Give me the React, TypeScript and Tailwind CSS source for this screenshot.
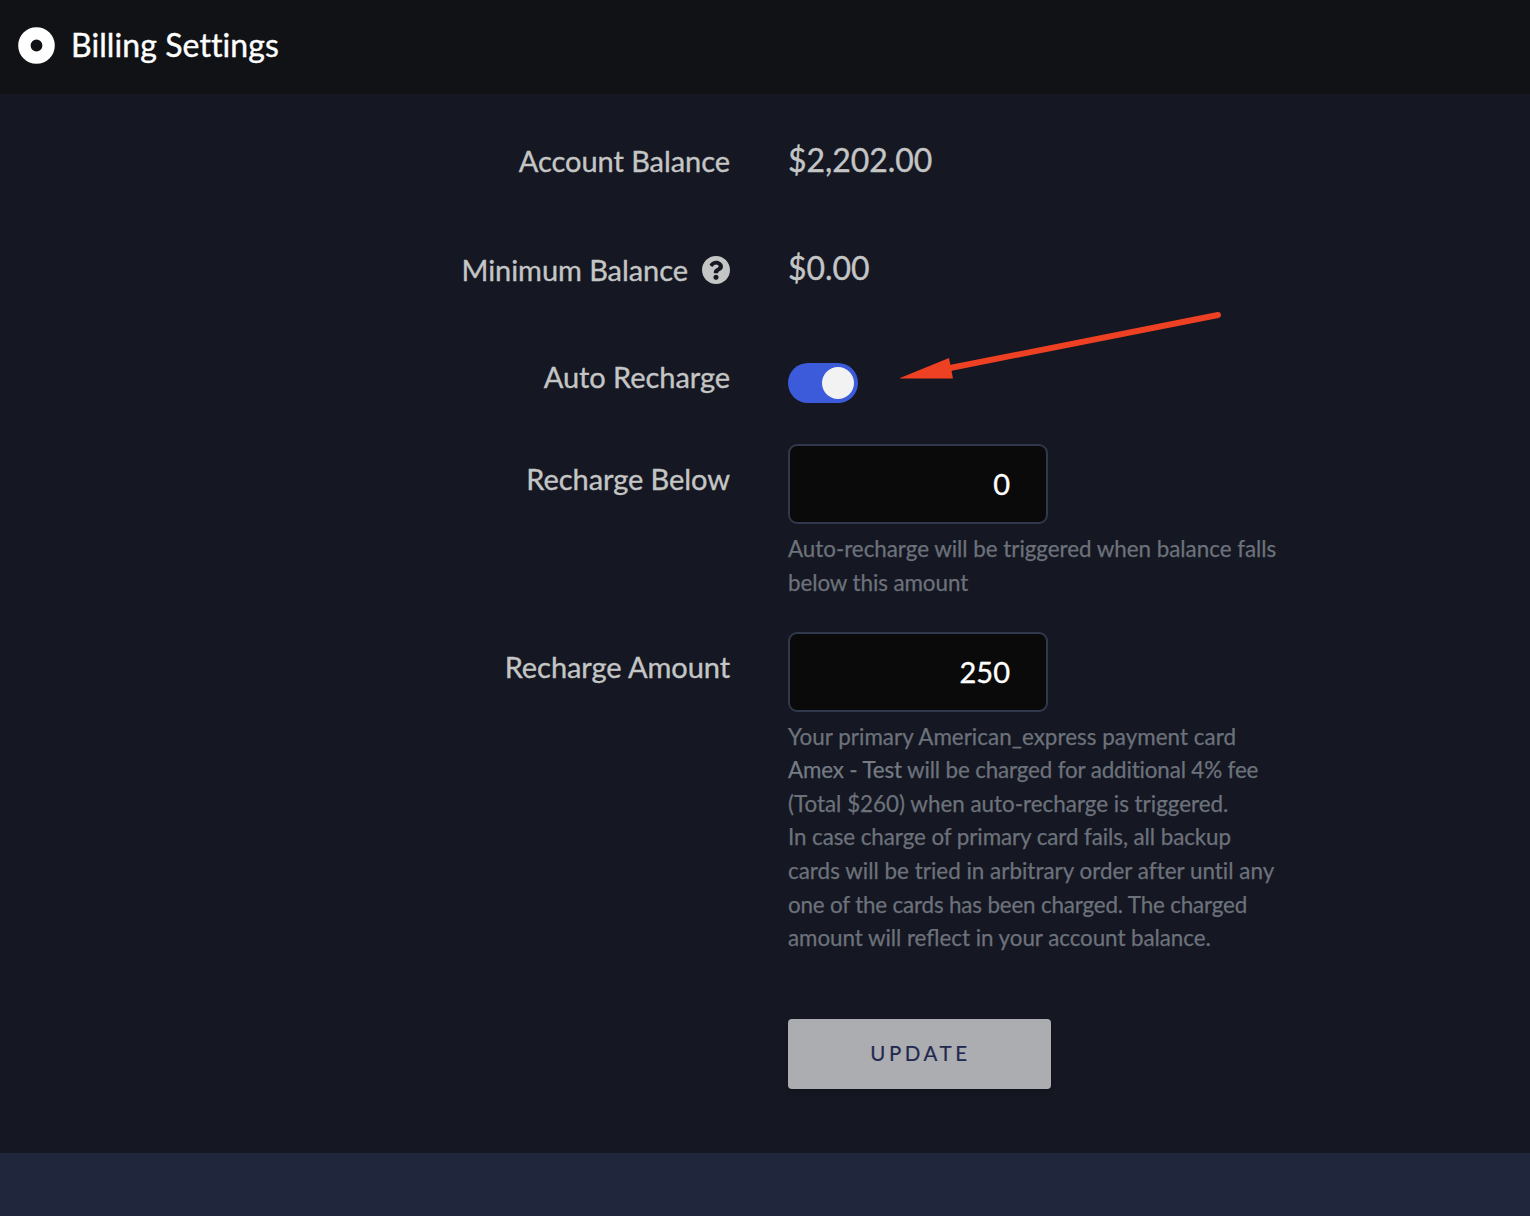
import React, {useState} from 'react';

interface RowProps {
  label: React.ReactNode;
  className: string;
  children: React.ReactNode;
}

const Row: React.FC<RowProps> = ({label, className, children}) => (
  <div className={`flex gap-[58px] ${className}`}>
    <div className="flex w-[730px] items-start justify-end text-[29px] leading-[34px] tracking-[-0.06px] text-[#c4c5c5] [-webkit-text-stroke:0.35px_currentColor]">
      {label}
    </div>
    <div className="w-[500px]">{children}</div>
  </div>
);

const HelpIcon: React.FC = () => (
  <svg viewBox="8 8 496 496" className="mt-[3px] ml-[14px] size-7" fill="currentColor" stroke="none">
    <path d="M504 256c0 136.997-111.043 248-248 248S8 392.997 8 256C8 119.083 119.043 8 256 8s248 111.083 248 248zM262.655 90c-54.497 0-89.255 22.957-116.549 63.758-3.536 5.286-2.353 12.415 2.715 16.258l34.699 26.31c5.205 3.947 12.621 3.008 16.665-2.122 17.864-22.658 30.113-35.797 57.303-35.797 20.429 0 45.698 13.148 45.698 32.958 0 14.976-12.363 22.667-32.534 33.976C247.128 238.528 216 254.941 216 296v4c0 6.627 5.373 12 12 12h56c6.627 0 12-5.373 12-12v-1.333c0-28.462 83.186-29.647 83.186-106.667 0-58.002-60.165-102-116.531-102zM256 338c-25.365 0-46 20.635-46 46 0 25.364 20.635 46 46 46s46-20.636 46-46c0-25.365-20.635-46-46-46z" />
  </svg>
);

const balanceClass =
  'text-[32px] leading-8 tracking-[-0.06px] text-[#c4c5c5] [-webkit-text-stroke:0.35px_currentColor]';
const inputClass =
  'block h-20 w-[260px] rounded-[9px] border-2 border-[#31384b] bg-[#0a0a0a] pr-9 pb-0.5 text-right text-[29px] text-white [-webkit-text-stroke:0.35px_currentColor] focus:outline-none';
const hintClass =
  'text-[22.4px] leading-[33.6px] text-[#6c727b] [-webkit-text-stroke:0.25px_currentColor]';

const App: React.FC = () => {
  const [enabled, setEnabled] = useState(true);
  const [below, setBelow] = useState('0');
  const [amount, setAmount] = useState('250');

  return (
    <div className="relative flex h-[1216px] w-[1530px] flex-col overflow-hidden bg-[#151722] font-['Lato',sans-serif] [font-variant-ligatures:none]">
      <header className="flex h-[94px] shrink-0 items-center bg-[#111215] pb-[3px] pl-[18px] text-white">
        <svg viewBox="0 0 37 37" className="size-[37px]" fill="none">
          <circle cx="18.5" cy="18.5" r="12.1" stroke="currentColor" strokeWidth="12.4" />
        </svg>
        <h1 className="-mt-0.5 ml-4 text-[32px] leading-10 tracking-[0.09px] [-webkit-text-stroke:0.4px_currentColor]">
          Billing Settings
        </h1>
      </header>

      <main className="flex h-[1059px] shrink-0 flex-col pt-[50px]">
        <Row label="Account Balance" className="h-[108px]">
          <div className={balanceClass}>$2,202.00</div>
        </Row>
        <Row
          label={
            <span className="flex pt-px">
              Minimum Balance
              <HelpIcon />
            </span>
          }
          className="h-[108px]"
        >
          <div className={balanceClass}>$0.00</div>
        </Row>
        <Row label="Auto Recharge" className="h-[84px]">
          <button
            role="switch"
            aria-checked={enabled}
            aria-label="Auto Recharge"
            onClick={() => setEnabled(!enabled)}
            className={`mt-[3px] flex h-10 w-[70px] items-center rounded-full p-1 ${enabled ? 'justify-end bg-[#3b5bdb]' : 'bg-[#2d3245]'}`}
          >
            <span className="size-8 rounded-full bg-[#f2f2f2]" />
          </button>
        </Row>
        <Row label={<span className="pt-[18px]">Recharge Below</span>} className="h-[188px]">
          <input
            aria-label="Recharge Below"
            value={below}
            onChange={e => setBelow(e.target.value)}
            className={inputClass}
          />
          <p className={`mt-2 ${hintClass}`}>
            <span className="tracking-[-0.03px]">
              Auto-recharge will be triggered when balance falls
            </span>
            <br />
            <span className="tracking-[-0.08px]">below this amount</span>
          </p>
        </Row>
        <Row label={<span className="pt-[18px]">Recharge Amount</span>} className="h-[387px]">
          <input
            aria-label="Recharge Amount"
            value={amount}
            onChange={e => setAmount(e.target.value)}
            className={inputClass}
          />
          <p className={`mt-[7.6px] ${hintClass}`}>
            <span className="tracking-[0.03px]">Your primary American_express payment card</span>
            <br />
            <span className="tracking-[-0.15px]">
              <span className="text-[#747b84]">Amex - Test</span> will be charged for additional 4%
              fee
            </span>
            <br />
            (Total $260) when auto-recharge is triggered.
            <br />
            <span className="tracking-[-0.08px]">
              In case charge of primary card fails, all backup
            </span>
            <br />
            <span className="tracking-[0.02px]">
              cards will be tried in arbitrary order after until any
            </span>
            <br />
            <span className="tracking-[-0.17px]">
              one of the cards has been charged. The charged
            </span>
            <br />
            <span className="tracking-[-0.06px]">
              amount will{' '}
              <span className="tracking-normal [font-variant-ligatures:normal]">reflect</span> in
              your account balance.
            </span>
          </p>
        </Row>
        <Row label="" className="h-[70px]">
          <button className="h-[70px] w-[263px] rounded bg-[#acadb1] pb-0.5 pl-0.5 text-[20.5px] tracking-[3.55px] text-[#232850] shadow-md [-webkit-text-stroke:0.2px_currentColor]">
            UPDATE
          </button>
        </Row>
      </main>

      <footer className="flex-1 bg-[#20263b]" />

      <svg
        viewBox="0 0 324 70"
        className="pointer-events-none absolute left-[900px] top-[311px] h-[70px] w-[324px] text-[#ee4023]"
      >
        <path d="M50 57 318 4" stroke="currentColor" strokeWidth="6" strokeLinecap="round" />
        <path d="M-1 67.5 49 47 53 67.5Z" fill="currentColor" />
      </svg>
    </div>
  );
};

export default App;
